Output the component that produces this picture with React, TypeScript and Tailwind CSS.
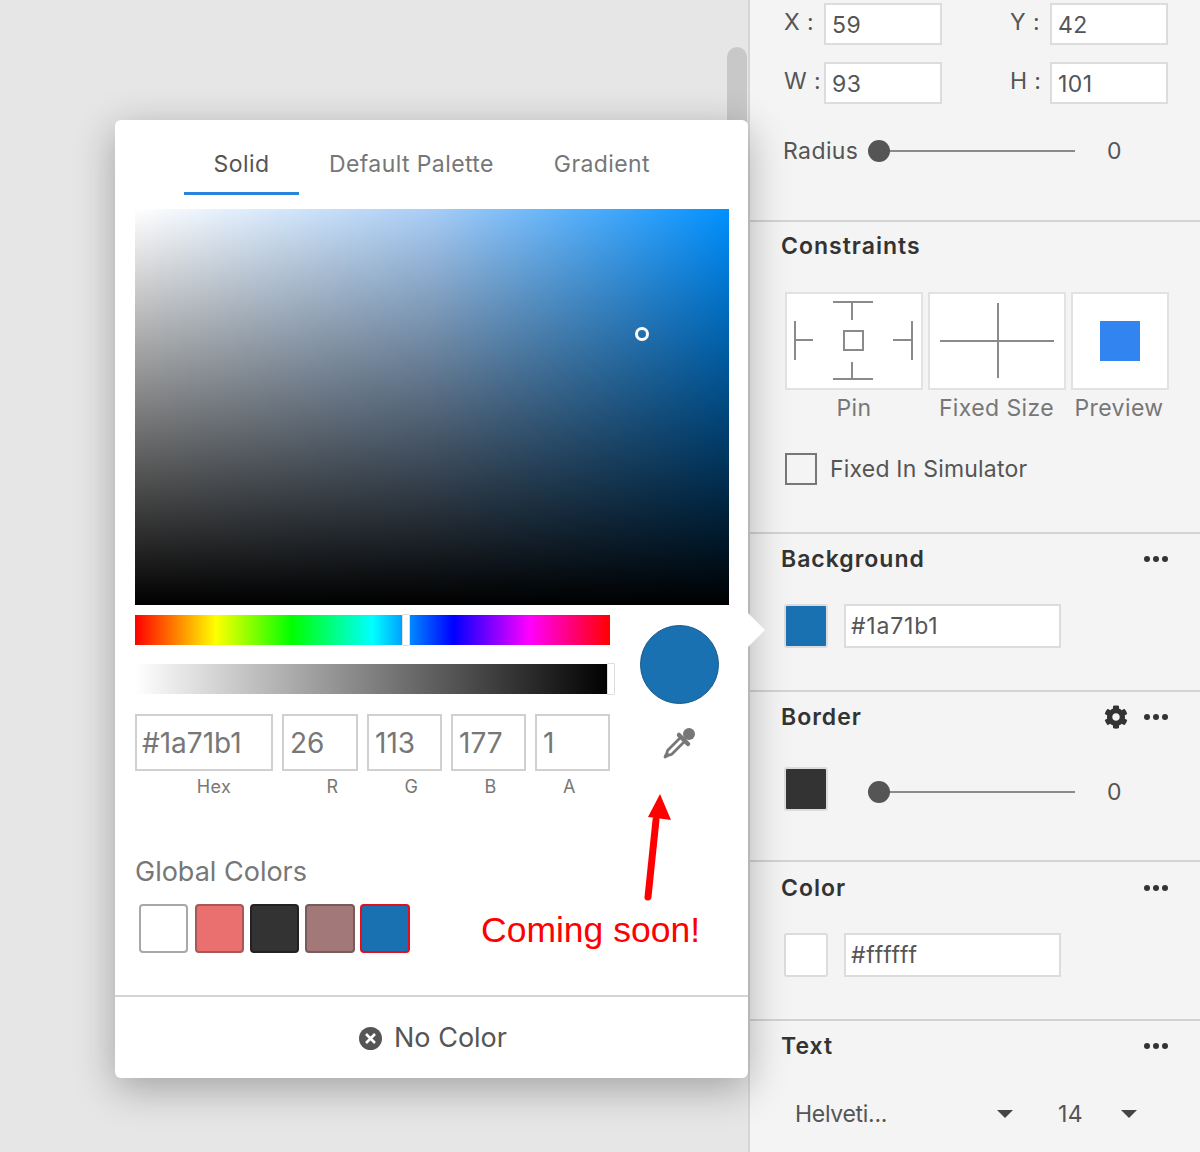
import React from "react";
import { FaCog } from "react-icons/fa";

const font = "font-['Inter','Liberation_Sans',sans-serif] tracking-[0.4px]";

const Dots = () => (
  <span className="flex items-center gap-[3px]">
    <span className="w-[6px] h-[6px] rounded-full bg-[#333]" />
    <span className="w-[6px] h-[6px] rounded-full bg-[#333]" />
    <span className="w-[6px] h-[6px] rounded-full bg-[#333]" />
  </span>
);

const Field = ({ label, value }: { label: string; value: string }) => (
  <div className="flex items-start w-[158px]">
    <span className="w-[40px] shrink-0 text-[23px] leading-[38px] text-[#555] whitespace-pre">{label}</span>
    <span className="w-[118px] h-[42px] bg-white border-2 border-[#dcdcdc] pl-[6px] text-[23px] leading-[40px] text-[#555]">{value}</span>
  </div>
);

const SectionHead = ({ title, gear, dots = true }: { title: string; gear?: boolean; dots?: boolean }) => (
  <div className="flex items-center h-[24px] pr-[32px]">
    <h3 className="text-[23px] font-semibold text-[#333] leading-none tracking-[1px]">{title}</h3>
    {dots && (
      <div className="ml-auto flex items-center gap-[16px]">
        {gear && <FaCog className="w-[24px] h-[24px] text-[#333]" />}
        <Dots />
      </div>
    )}
  </div>
);

const Slider = ({ value }: { value: string }) => (
  <div className="flex items-center">
    <div className="relative w-[207px] h-[2px] bg-[#8a8a8a]">
      <span className="absolute left-0 top-[-10px] w-[22px] h-[22px] rounded-full bg-[#555]" />
    </div>
    <span className="ml-[32px] text-[23px] text-[#555]">{value}</span>
  </div>
);

const ColorRow = ({ color, value }: { color: string; value: string }) => (
  <div className="flex items-center gap-[16px]">
    <span className={`w-[44px] h-[44px] rounded-[3px] border-2 border-[#dcdcdc] ${color}`} />
    <span className="w-[217px] h-[44px] bg-white border-2 border-[#dcdcdc] pl-[5px] text-[23px] leading-[41px] text-[#555] tracking-[0.8px]">{value}</span>
  </div>
);

const Inspector = () => (
  <aside className="w-[452px] h-full bg-[#f4f4f4] border-l-2 border-[#d6d6d6] overflow-hidden">
    <section className="h-[222px] pl-[34px] pt-[3px] border-b-2 border-[#d2d2d2]">
      <div className="grid grid-cols-[226px_158px] gap-y-[17px]">
        <Field label="X :" value="59" />
        <Field label="Y :" value="42" />
        <Field label="W :" value="93" />
        <Field label="H :" value="101" />
      </div>
      <div className="flex items-center mt-[30px] -ml-[1px]">
        <span className="w-[85px] text-[23px] text-[#555]">Radius</span>
        <Slider value="0" />
      </div>
    </section>

    <section className="h-[312px] pl-[31px] pt-[12px] border-b-2 border-[#d2d2d2]">
      <SectionHead title="Constraints" dots={false} />
      <div className="flex gap-[5px] ml-[4px] mt-[34px]">
        <div className="w-[138px] h-[98px] bg-white border-2 border-[#e2e2e2]">
          <svg width="134" height="94" fill="none" stroke="#8a8a8a" strokeWidth="2">
            <path d="M8 27v39M8 46h18M46 8h40M65 8v18M125 27v39M106 46h19M46 85h40M65 85V68M57 37h19v19H57z" />
          </svg>
        </div>
        <div className="w-[138px] h-[98px] bg-white border-2 border-[#e2e2e2]">
          <svg width="134" height="94" fill="none" stroke="#8a8a8a" strokeWidth="2">
            <path d="M10 47h114M68 9v75" />
          </svg>
        </div>
        <div className="w-[98px] h-[98px] bg-white border-2 border-[#e2e2e2] flex items-center justify-center">
          <span className="w-[40px] h-[40px] bg-[#3284f0]" />
        </div>
      </div>
      <div className="flex ml-[4px] mt-[4px] text-[23px] text-[#777] leading-[28px]">
        <span className="w-[138px] text-center">Pin</span>
        <span className="w-[143px] ml-[2px] text-center">Fixed Size</span>
        <span className="w-[98px] ml-[2px] text-center whitespace-nowrap">Preview</span>
      </div>
      <div className="flex items-center ml-[4px] mt-[30px]">
        <span className="w-[32px] h-[32px] border-2 border-[#777]" />
        <span className="ml-[13px] text-[23px] text-[#555] tracking-[0.2px]">Fixed In Simulator</span>
      </div>
    </section>

    <section className="h-[158px] pl-[34px] pt-[13px] border-b-2 border-[#d2d2d2]">
      <div className="-ml-[3px]"><SectionHead title="Background" /></div>
      <div className="mt-[33px]">
        <ColorRow color="bg-[#1a71b1]" value="#1a71b1" />
      </div>
    </section>

    <section className="h-[170px] pl-[34px] pt-[13px] border-b-2 border-[#d2d2d2]">
      <div className="-ml-[3px]"><SectionHead title="Border" gear /></div>
      <div className="flex items-center mt-[38px] gap-[40px]">
        <span className="w-[44px] h-[44px] rounded-[3px] border-2 border-[#dcdcdc] bg-[#333]" />
        <div className="mt-[6px]"><Slider value="0" /></div>
      </div>
    </section>

    <section className="h-[159px] pl-[34px] pt-[14px] border-b-2 border-[#d2d2d2]">
      <div className="-ml-[3px]"><SectionHead title="Color" /></div>
      <div className="mt-[33px]">
        <ColorRow color="bg-white" value="#ffffff" />
      </div>
    </section>

    <section className="pl-[31px] pt-[13px]">
      <SectionHead title="Text" />
      <div className="flex items-center mt-[39px] pl-[14px] text-[23px] text-[#555]">
        <span className="w-[202px] tracking-[-0.3px]">Helveti...</span>
        <span className="w-0 h-0 border-x-[8px] border-x-transparent border-t-[8px] border-t-[#444]" />
        <span className="ml-[45px] w-[63px]">14</span>
        <span className="w-0 h-0 border-x-[8px] border-x-transparent border-t-[8px] border-t-[#444]" />
      </div>
    </section>
  </aside>
);

const rgba = [
  { label: "R", value: "26", w: "w-[76px]" },
  { label: "G", value: "113", w: "w-[75px]" },
  { label: "B", value: "177", w: "w-[75px]" },
  { label: "A", value: "1", w: "w-[75px]" },
];

const swatches = [
  { cls: "w-[49px] bg-white border-[#a8a8a8]", ml: "ml-[4px]" },
  { cls: "w-[49px] bg-[#ea7070] border-[#a85656]", ml: "ml-[7px]" },
  { cls: "w-[49px] bg-[#333333] border-[#222]", ml: "ml-[6px]" },
  { cls: "w-[50px] bg-[#a37878] border-[#7a5a5a]", ml: "ml-[6px]" },
  { cls: "w-[50px] bg-[#1a71b1] border-[#e01020]", ml: "ml-[5px]" },
];

const Picker = () => (
  <div className="absolute left-[115px] top-[120px] w-[633px] h-[958px] bg-white rounded-[6px] shadow-[0_10px_40px_rgba(0,0,0,0.3)]">
    <span className="absolute left-[621px] top-[498px] w-[24px] h-[24px] bg-white rotate-45" />

    <div className="relative flex h-[75px] pl-[69px] text-[23px] text-[#777]">
      <span className="w-[115px] h-full text-center leading-[88px] text-[#555] border-b-[3px] border-[#2b84dc]">Solid</span>
      <span className="ml-[30px] leading-[88px] whitespace-nowrap">Default Palette</span>
      <span className="ml-[60px] leading-[88px]">Gradient</span>
    </div>

    <div className="relative ml-[20px] mt-[14px] w-[594px] h-[396px] bg-[linear-gradient(to_top,#000,transparent),linear-gradient(to_right,#fff,#a8cdf6_50%,#0090ff)]">
      <span className="absolute left-[500px] top-[118px] w-[14px] h-[14px] rounded-full bg-transparent border-[3px] border-white" />
    </div>

    <div className="relative flex ml-[20px] mt-[10px]">
      <div className="w-[475px]">
        <div className="relative h-[30px] bg-[linear-gradient(to_right,#f00,#ff0_17%,#0f0_33%,#0ff_50%,#00f_67%,#f0f_83%,#f00)]">
          <span className="absolute left-[267px] top-[-1px] w-[8px] h-[32px] bg-white rounded-[1px] border border-[#ddd]" />
        </div>
        <div className="relative h-[30px] mt-[19px] bg-[linear-gradient(to_right,#fff,#000)]">
          <span className="absolute right-[-5px] top-[-1px] w-[8px] h-[32px] bg-white rounded-[1px] border border-[#ddd]" />
        </div>
        <div className="flex mt-[20px] gap-[9px] text-[28px] text-[#777] tracking-normal">
          <span className="w-[138px] h-[57px] border-2 border-[#d0d0d0] pl-[5px] leading-[55px]">#1a71b1</span>
          {rgba.map((f) => (
            <span key={f.label} className={`${f.w} h-[57px] border-2 border-[#d0d0d0] pl-[6px] leading-[55px]`}>{f.value}</span>
          ))}
        </div>
        <div className="flex mt-[3px] text-[18px] leading-[26px] text-[#777]">
          <span className="w-[158px] text-center">Hex</span>
          <span className="w-[79px] text-center">R</span>
          <span className="w-[79px] text-center">G</span>
          <span className="w-[79px] text-center">B</span>
          <span className="w-[79px] text-center">A</span>
        </div>
      </div>
      <div className="ml-[30px] w-[79px] flex flex-col items-center">
        <span className="mt-[10px] w-[79px] h-[79px] rounded-full bg-[#1a71b1] border border-[#15598c]" />
        <svg className="mt-[21px]" width="36" height="36" viewBox="0 0 36 36" fill="none">
          <path d="M20 11 6 25q-1 1-1 3l-2 4 4-2q2 0 3-1l14-14" stroke="#777" strokeWidth="2.8" strokeLinejoin="round" />
          <path d="M17 10 26 19" stroke="#777" strokeWidth="4.5" strokeLinecap="round" />
          <circle cx="27" cy="9" r="6" fill="#777" />
        </svg>
      </div>
    </div>

    <div className="ml-[20px] mt-[56px] text-[27px] leading-[32px] text-[#777] tracking-normal">Global Colors</div>
    <div className="flex items-start h-[49px] ml-[20px] mt-[16px]">
      {swatches.map((s, i) => (
        <span key={i} className={`h-[49px] rounded-[4px] border-2 ${s.cls} ${s.ml}`} />
      ))}
    </div>

    <div className="flex items-center justify-center h-[82px] mt-[42px] pt-[2px] pl-[3px] border-t-2 border-[#d4d4d4] text-[27px] text-[#555] tracking-normal">
      <span className="w-[23px] h-[23px] rounded-full bg-[#555] flex items-center justify-center">
        <svg width="11" height="11" stroke="#fff" strokeWidth="2.6"><path d="M1 1l9 9M10 1l-9 9" /></svg>
      </span>
      <span className="ml-[12px]">No Color</span>
    </div>

    <span className="absolute left-[366px] top-[787px] text-[35.5px] leading-[46px] text-[#f00] font-['Liberation_Sans',sans-serif] tracking-normal whitespace-nowrap">Coming soon!</span>
    <svg className="absolute left-[520px] top-[670px]" width="50" height="112" fill="none">
      <path d="M13 107 21 30" stroke="#f00" strokeWidth="7" strokeLinecap="round" />
      <path d="M25 4 36 30 13 27z" fill="#f00" />
    </svg>
  </div>
);

export default function App() {
  return (
    <div className={`relative flex w-[1200px] h-[1152px] overflow-hidden ${font}`}>
      <main className="w-[748px] h-full bg-[#e6e6e6]" />
      <span className="absolute left-[727px] top-[47px] w-[20px] h-[100px] rounded-full bg-[#c8c8c8]" />
      <Inspector />
      <Picker />
    </div>
  );
}
